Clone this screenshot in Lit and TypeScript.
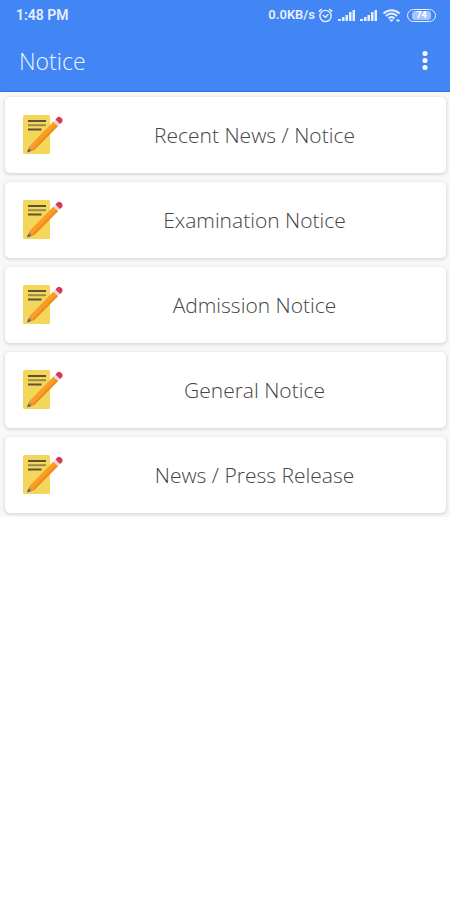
import { LitElement, html, css, svg } from "lit";
import { customElement, property } from "lit/decorators.js";

const signal = svg`
  <path d="M0 12v-2h3v2zM4 12V8h2.500v4zM7.500 12V6H10v6zM11 12V3h2.500v9zM14.500 12V1H17v11z" fill="#e8f0fe"/>`;

@customElement("status-bar")
export class StatusBar extends LitElement {
  static styles = css`
    :host {
      display: flex;
      justify-content: space-between;
      align-items: center;
      height: 30px;
      padding: 0 14px 0 16px;
      color: #e8f0fe;
      font: 600 14px/16px Roboto, sans-serif;
    }
    .right {
      display: flex;
      align-items: center;
      gap: 5px;
    }
    .rate {
      font-size: 13px;
      margin-right: -2px;
    }
    svg {
      display: block;
    }
    .battery {
      box-sizing: border-box;
      width: 29px;
      height: 13px;
      border: 1px solid #e8f0fe;
      border-radius: 7px;
      padding: 1px 4px;
      display: flex;
    }
    .level {
      flex: 1;
      border-radius: 3px;
      background: #a6c6fb;
      color: #fff;
      font: 700 9px/9px Roboto, sans-serif;
      text-align: center;
    }
  `;

  render() {
    return html`
      <span class="time">1:48 PM</span>
      <div class="right">
        <span class="rate">0.0KB/s</span>
        <svg width="15" height="15" viewBox="0 0 15 15" fill="none" stroke="#e8f0fe" stroke-width="1.4">
          <circle cx="7.5" cy="8" r="5.6" />
          <path d="M.8 3.6 3.8 1M14.2 3.6l-3-2.6M4.8 7l2.7 2.2L10.4 6.2" />
        </svg>
        <svg width="17" height="12" viewBox="0 0 17 12">${signal}</svg>
        <svg width="17" height="12" viewBox="0 0 17 12">${signal}</svg>
        <svg width="20" height="15" viewBox="0 0 20 15" fill="none" stroke="#e8f0fe" stroke-width="2">
          <path d="M1.5 5.5C6 1 13 1 17.5 5.5M4 8c3.2-3.2 7.8-3.2 11 0M6.5 10.4c2-1.8 4-1.8 6 0" />
          <path d="M9.5 14 7 11.4h5z" fill="#e8f0fe" stroke="none" />
          <path d="M14.500 12.500h3" stroke-width="2" />
        </svg>
        <div class="battery"><span class="level">74</span></div>
      </div>
    `;
  }
}

@customElement("notice-item")
export class NoticeItem extends LitElement {
  @property() label = "";

  static styles = css`
    :host {
      display: block;
    }
    .card {
      box-sizing: border-box;
      width: 100%;
      height: 76px;
      display: flex;
      align-items: center;
      padding: 0 0 0 18px;
      border: 0;
      border-radius: 5px;
      background: #fff;
      box-shadow: 0 1px 3px 1px #dcdcdc;
      color: #444;
      font: 300 21px/28px "Open Sans", sans-serif;
      cursor: pointer;
    }
    .icon {
      flex: none;
      display: block;
    }
    .label {
      flex: 1;
      text-align: center;
    }
  `;

  render() {
    return html`
      <button class="card" type="button">
        <svg class="icon" width="40" height="40" viewBox="0 0 40 40" aria-hidden="true">
          <rect x="0" y="0" width="27" height="39" rx="1.5" fill="#f4d75a" />
          <path d="M5 6h18M5 14.5h13.5" stroke="#5b5333" stroke-width="2" />
          <path d="M5 10.200h18" stroke="#998a49" stroke-width="2" />
          <path d="M4 37.5 6.5 31 11 35.2z" fill="#c9965f" />
          <path d="M4 37.5 5.5 33.6 8.2 36z" fill="#75595a" />
          <path d="M6.5 31 30.5 6.5 35 11 11 35.2z" fill="#f99d26" />
          <path d="M9.5 33.9 33.500 9.5 35 11 11 35.2z" fill="#ec8c1c" />
          <path d="M30.5 6.5 33 4 37.5 8.5 35 11z" fill="#ead9d5" />
          <path d="M32.5 4.5 34.2 2.6Q36 1 37.8 2.4L39 3.6Q40.2 5.5 38.9 7.2L37 9z" fill="#d63857" />
        </svg>
        <span class="label">${this.label}</span>
      </button>
    `;
  }
}

@customElement("app-root")
export class AppRoot extends LitElement {
  static styles = css`
    :host {
      display: block;
      min-height: 100vh;
      background: #fff;
    }
    .top {
      background: #4285f4;
      border-bottom: 1px solid #2f72e8;
    }
    .bar {
      display: flex;
      align-items: center;
      justify-content: space-between;
      height: 61px;
      padding: 0 13px 0 19px;
    }
    .title {
      margin: 0;
      color: #f1f6ff;
      font: 300 23px/30px "Open Sans", sans-serif;
    }
    .menu {
      display: flex;
      justify-content: center;
      width: 24px;
      padding: 4px 0;
      border: 0;
      background: none;
      cursor: pointer;
    }
    .list {
      display: flex;
      flex-direction: column;
      gap: 9px;
      margin: 0;
      padding: 5px 4px 4px 5px;
      background: #f8f8f8;
      list-style: none;
    }
  `;

  private items = [
    "Recent News / Notice",
    "Examination Notice",
    "Admission Notice",
    "General Notice",
    "News / Press Release",
  ];

  render() {
    return html`
      <header class="top">
        <status-bar></status-bar>
        <div class="bar">
          <h1 class="title">Notice</h1>
          <button class="menu" type="button" aria-label="More options">
            <svg width="6" height="20" viewBox="0 0 6 20" fill="#fff">
              <circle cx="3" cy="2.500" r="2.5" />
              <circle cx="3" cy="9.500" r="2.5" />
              <circle cx="3" cy="16.500" r="2.5" />
            </svg>
          </button>
        </div>
      </header>
      <ul class="list">
        ${this.items.map((label) => html`<li><notice-item .label=${label}></notice-item></li>`)}
      </ul>
    `;
  }
}
